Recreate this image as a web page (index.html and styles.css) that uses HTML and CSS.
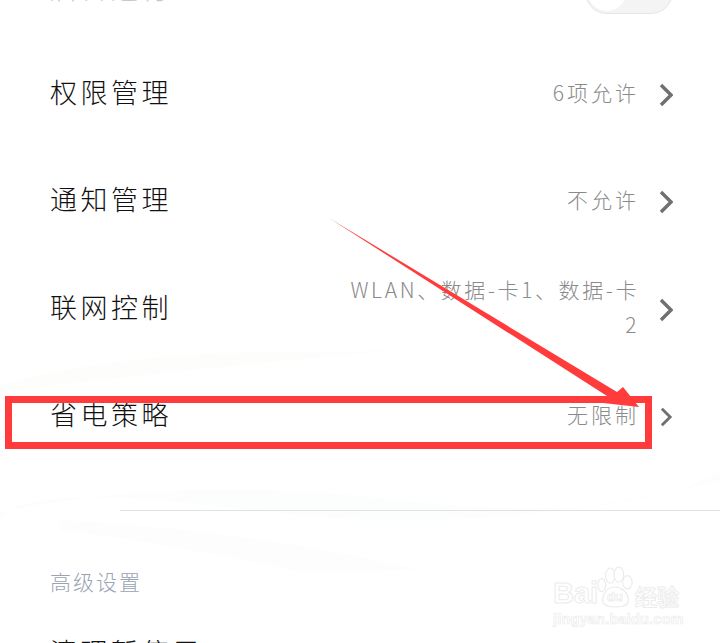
FILE: index.html
```html
<!DOCTYPE html>
<html lang="zh-CN">
<head>
    <meta charset="UTF-8">
    <title>应用设置</title>
    <link rel="stylesheet" href="styles.css">
</head>
<body>
    <div class="screen">
        <svg class="streaks" viewBox="0 0 720 643" aria-hidden="true">
            <path d="M0 385 Q120 352 280 352 T420 346 L420 349 Q250 362 0 392Z" fill="#fdfdfb"/>
            <path d="M0 512 Q180 474 400 500 T720 472 L720 480 Q480 540 250 510 T0 520Z" fill="#fcfdfd"/>
            <path d="M60 520 Q250 530 420 570 L300 572 Q150 540 60 530Z" fill="#fdfdfd"/>
        </svg>

        <div class="list">
            <div class="row row-top">
                <span class="row-title row-title-faint">后台运行</span>
                <span class="toggle"><span class="toggle-knob"></span></span>
            </div>
            <div class="row">
                <span class="row-title">权限管理</span>
                <span class="row-value">6项允许</span>
                <svg class="chevron" viewBox="0 0 14 24"><path d="M2 2l10 10-10 10"/></svg>
            </div>
            <div class="row">
                <span class="row-title">通知管理</span>
                <span class="row-value">不允许</span>
                <svg class="chevron" viewBox="0 0 14 24"><path d="M2 2l10 10-10 10"/></svg>
            </div>
            <div class="row">
                <span class="row-title">联网控制</span>
                <span class="row-value row-value-wrap">WLAN、数据-卡1、数据-卡2</span>
                <svg class="chevron" viewBox="0 0 14 24"><path d="M2 2l10 10-10 10"/></svg>
            </div>
            <div class="row">
                <span class="row-title">省电策略</span>
                <span class="row-value">无限制</span>
                <svg class="chevron chevron-small" viewBox="0 0 14 24"><path d="M2 2l10 10-10 10"/></svg>
            </div>
        </div>

        <div class="divider"></div>
        <div class="section-label">高级设置</div>
        <div class="row-title row-cut">清理暂停用</div>

        <!-- 标注 -->
        <div class="mark-box"></div>
        <svg class="mark-arrow" viewBox="0 0 720 643" aria-hidden="true">
            <polygon points="329,218 617,392 623,387 639,407 603,403 607,396" fill="#ff3b3b"/>
        </svg>

        <div class="watermark">
            <div class="wm-top">
                <span class="wm-baidu">Bai</span>
                <svg class="wm-paw" viewBox="0 0 40 44">
                    <ellipse cx="14" cy="10" rx="5" ry="8"/>
                    <ellipse cx="23" cy="9" rx="5" ry="8"/>
                    <ellipse cx="32" cy="17" rx="5" ry="7"/>
                    <ellipse cx="5" cy="20" rx="4" ry="7"/>
                    <path d="M6 36c0-9 7-14 13-14s14 5 14 14c0 6-6 7-13 7S6 42 6 36z"/>
                </svg>
                <span class="wm-du">du</span>
                <span class="wm-cn">经验</span>
            </div>
            <div class="wm-url">jingyan.baidu.com</div>
        </div>
    </div>
</body>
</html>
```

FILE: styles.css
```css
html, body {
    margin: 0;
    padding: 0;
    background: #ffffff;
}

.screen {
    position: relative;
    width: 720px;
    height: 643px;
    overflow: hidden;
    background: #ffffff;
    font-family: "Noto Sans CJK SC", "Noto Sans", sans-serif;
    font-weight: 300;
}

.streaks {
    position: absolute;
    top: 0;
    left: 0;
    width: 720px;
    height: 643px;
}

.list {
    position: relative;
    margin-top: -69px;
    padding: 0 47px 0 50px;
}

.row {
    display: flex;
    align-items: center;
    height: 107.5px;
}

.row-top {
    justify-content: space-between;
}

.row-title {
    flex: none;
    margin-bottom: 2px;
    font-size: 27px;
    letter-spacing: 3.5px;
    color: #111111;
    white-space: nowrap;
}

.row-title-faint {
    margin-top: 5px;
    margin-bottom: 0;
    color: #c8c8c8;
}

.row-value {
    flex: 1;
    margin-right: 20px;
    font-size: 21px;
    line-height: 35px;
    letter-spacing: 3px;
    color: #8a8a8a;
    text-align: right;
}

.row-value-wrap {
    margin-left: 178px;
    letter-spacing: 2.6px;
    word-break: break-all;
}

.chevron {
    flex: none;
    width: 14px;
    height: 24px;
    margin-top: 5px;
    fill: none;
    stroke: #707070;
    stroke-width: 3.4;
}

.chevron-small {
    height: 20px;
}

.toggle {
    display: block;
    box-sizing: border-box;
    width: 88px;
    height: 44px;
    margin-top: 14px;
    border: 1px solid #e6e6e6;
    border-radius: 22px;
    background: #f4f4f4;
    padding: 2px;
}

.toggle-knob {
    display: block;
    width: 38px;
    height: 38px;
    border-radius: 50%;
    background: #ffffff;
}

.divider {
    position: relative;
    height: 1px;
    margin: 41px 0 0 120px;
    background: #e2e2e2;
}

.section-label {
    position: relative;
    margin: 55px 0 0 50px;
    font-size: 21px;
    line-height: 30px;
    letter-spacing: 2px;
    color: #9aa3b2;
}

.row-cut {
    position: relative;
    margin: 36px 0 0 50px;
}

.mark-box {
    position: absolute;
    left: 5px;
    top: 396px;
    width: 647px;
    height: 53px;
    box-sizing: border-box;
    border: 7px solid #ff3b3b;
}

.mark-arrow {
    position: absolute;
    top: 0;
    left: 0;
    width: 720px;
    height: 643px;
}

.watermark {
    position: absolute;
    left: 553px;
    top: 566px;
    width: 128px;
    font-family: "Liberation Sans", sans-serif;
    font-weight: 700;
    color: #ffffff;
    -webkit-text-stroke: 1px #ececec;
}

.wm-top {
    position: relative;
    display: flex;
    align-items: flex-end;
    height: 42px;
}

.wm-baidu {
    font-size: 29px;
    line-height: 30px;
}

.wm-paw {
    position: absolute;
    left: 44px;
    top: 0;
    width: 38px;
    height: 42px;
    fill: #ffffff;
    stroke: #ebebeb;
    stroke-width: 1.2;
}

.wm-du {
    position: absolute;
    left: 54px;
    top: 23px;
    font-size: 13px;
    -webkit-text-stroke: 0.6px #e6e6e6;
}

.wm-cn {
    position: absolute;
    left: 82px;
    top: 16px;
    font-family: "Noto Sans CJK SC", sans-serif;
    font-size: 22px;
    line-height: 26px;
    white-space: nowrap;
}

.wm-url {
    margin-top: 2px;
    font-size: 14.5px;
    line-height: 18px;
    letter-spacing: 0.2px;
    white-space: nowrap;
    -webkit-text-stroke: 0.7px #ececec;
}
```
